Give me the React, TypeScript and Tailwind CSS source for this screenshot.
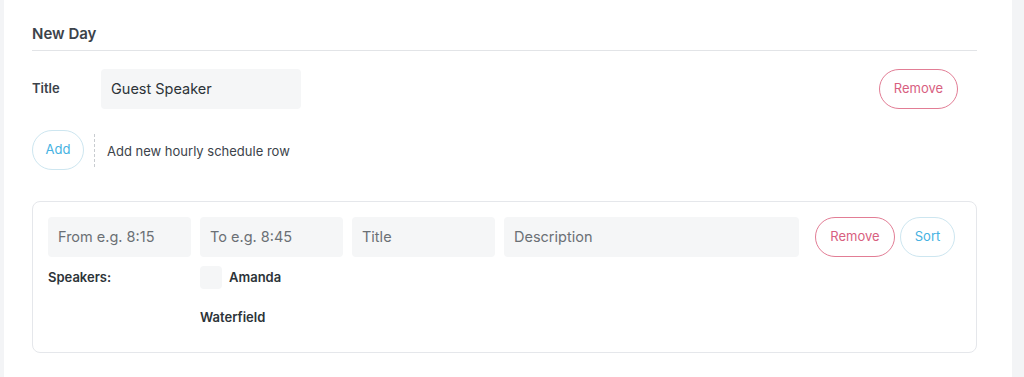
import React from "react";

export default function App() {
  const font = { fontFamily: "Inter, 'Noto Sans', sans-serif" };
  return (
    <div className="flex w-[1024px] h-[377px] bg-white overflow-hidden" style={font}>
      <div className="w-[4px] bg-[#f3f4f6] shrink-0" />
      <div className="flex-1 pl-[28px] pr-[35px] pt-[24px]">
        <div className="text-[15px] leading-[20px] font-semibold text-[#3c434a] pb-[6px] border-b border-[#e2e4e7]">
          New Day
        </div>
        <div className="flex items-center mt-[18px] pr-[19px]">
          <div className="w-[69px] text-[13px] font-semibold text-[#3c434a]">Title</div>
          <div className="w-[200px] h-[40px] rounded-[4px] bg-[#f5f6f7] flex items-center px-[10px] text-[14.5px] text-[#2c3338]">
            Guest Speaker
          </div>
          <div className="flex-1" />
          <button className="h-[40px] w-[79px] rounded-full border border-[#e27d95] text-[#d8607f] text-[13px] bg-white">
            Remove
          </button>
        </div>
        <div className="flex items-center mt-[21px]">
          <button className="h-[40px] w-[52px] rounded-full border border-[#cde6f0] text-[#45b2e2] text-[13px] bg-white">
            Add
          </button>
          <div className="ml-[10px] h-[33px] border-l border-dashed border-[#c8ccd0]" />
          <div className="ml-[12px] text-[13px] text-[#3c434a] pt-[3px]">Add new hourly schedule row</div>
        </div>
        <div className="mt-[31px] border border-[#e5e7eb] rounded-[8px] h-[152px] px-[15px] pt-[15px]">
          <div className="flex items-center">
            <div className="w-[143px] h-[40px] rounded-[4px] bg-[#f5f6f7] flex items-center px-[10px] text-[14.5px] text-[#6b7075]">
              From e.g. 8:15
            </div>
            <div className="ml-[9px] w-[143px] h-[40px] rounded-[4px] bg-[#f5f6f7] flex items-center px-[10px] text-[14.5px] text-[#6b7075]">
              To e.g. 8:45
            </div>
            <div className="ml-[9px] w-[143px] h-[40px] rounded-[4px] bg-[#f5f6f7] flex items-center px-[10px] text-[14.5px] text-[#6b7075]">
              Title
            </div>
            <div className="ml-[9px] w-[295px] h-[40px] rounded-[4px] bg-[#f5f6f7] flex items-center px-[10px] text-[14.5px] text-[#6b7075]">
              Description
            </div>
            <button className="ml-[16px] h-[40px] w-[80px] rounded-full border border-[#e27d95] text-[#d8607f] text-[13px] bg-white">
              Remove
            </button>
            <button className="ml-[5px] h-[40px] w-[55px] rounded-full border border-[#cde6f0] text-[#45b2e2] text-[13px] bg-white">
              Sort
            </button>
          </div>
          <div className="flex mt-[9px]">
            <div className="w-[152px] h-[23px] flex items-center text-[13px] font-semibold text-[#2c3338]">Speakers:</div>
            <div className="flex flex-col">
              <div className="flex items-center">
                <div className="w-[22px] h-[23px] rounded-[4px] bg-[#f5f6f7]" />
                <div className="ml-[7px] text-[13px] font-semibold text-[#2c3338]">Amanda</div>
              </div>
              <div className="mt-[17px] h-[23px] flex items-center text-[13px] font-semibold text-[#2c3338]">Waterfield</div>
            </div>
          </div>
        </div>
      </div>
      <div className="w-[12px] bg-[#f3f4f6] shrink-0" />
    </div>
  );
}
